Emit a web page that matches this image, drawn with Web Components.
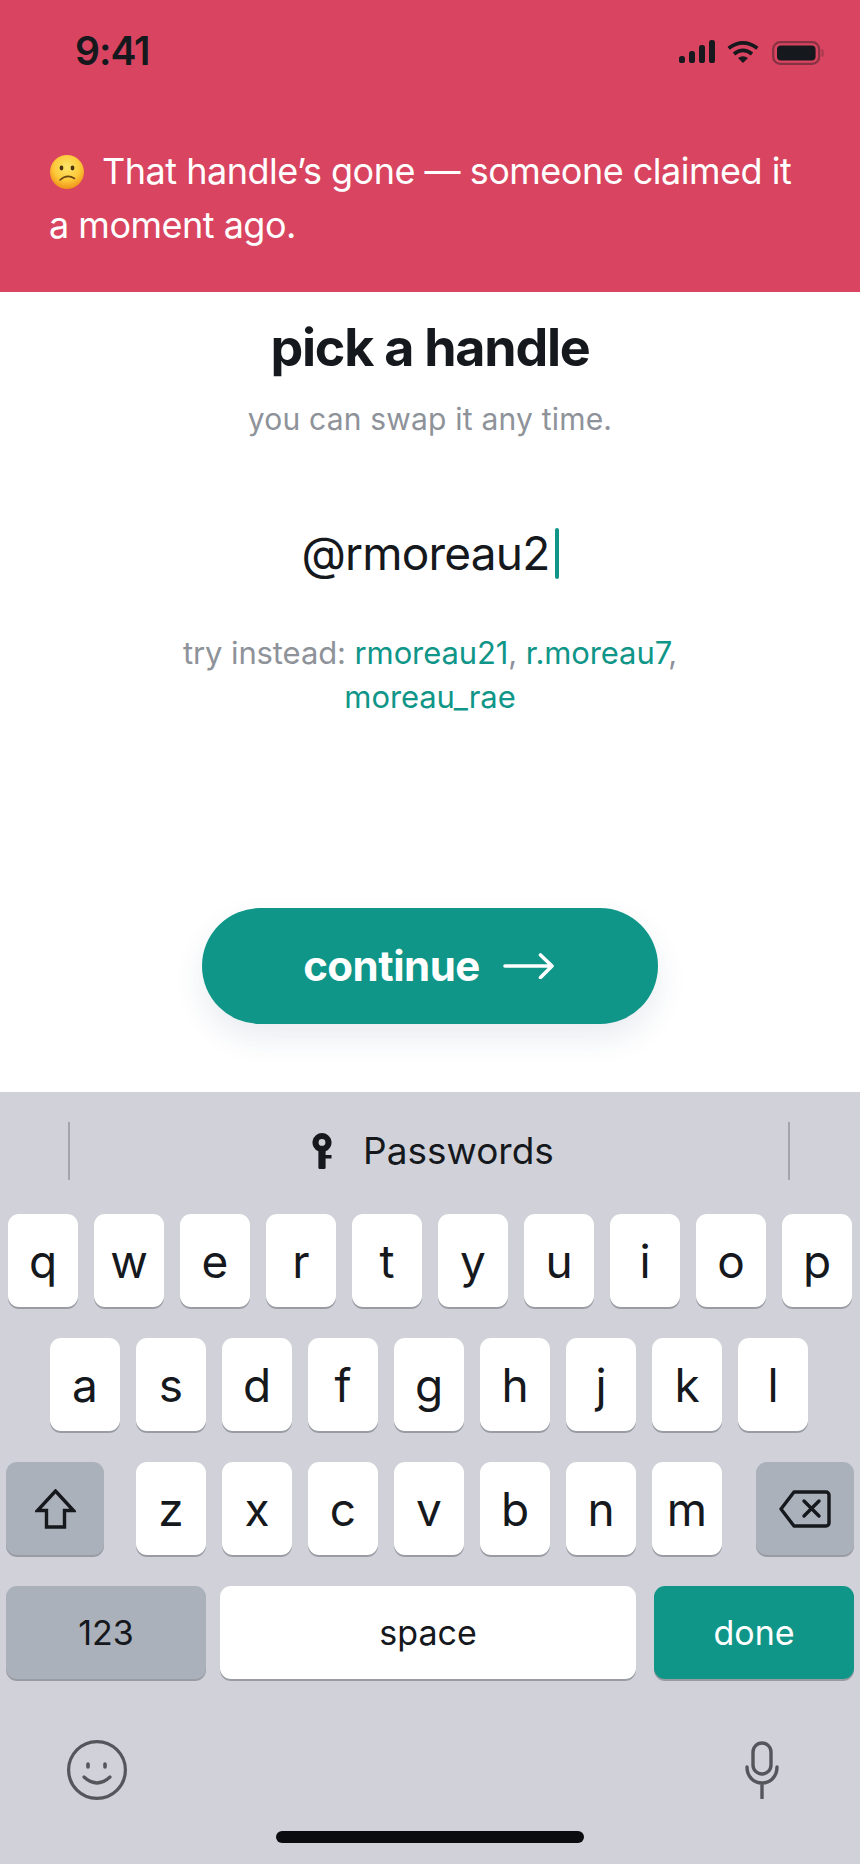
<!DOCTYPE html>
<html lang="en">
<head>
<meta charset="utf-8">
<title>pick a handle</title>
<style>
	html, body { margin: 0; padding: 0; }
	body { width: 860px; height: 1864px; background: #fff; font-family: Inter, "Liberation Sans", sans-serif; overflow: hidden; }
	handle-form em { font-style: normal; color: #0f9688; }
</style>
</head>
<body>
<handle-screen>
	<error-banner slot="banner">
		<sad-emoji></sad-emoji>That handle’s gone — someone claimed it a moment ago.
	</error-banner>
	<handle-form slot="form" value="@rmoreau2">
		<span slot="hint">try instead: <em>rmoreau21</em>, <em>r.moreau7</em>, <em>moreau_rae</em></span>
	</handle-form>
	<kb-keyboard slot="keyboard"></kb-keyboard>
</handle-screen>

<script>
const ICONS = {
	shift: `<svg width="41" height="40" viewBox="0 0 41 40" fill="none" stroke="#15181c" stroke-width="3.4" stroke-linejoin="miter"><path d="M20.5 2 L38.5 21.5 H29.5 V38 H11.5 V21.5 H2.5 Z"/></svg>`,
	del: `<svg width="52" height="38" viewBox="0 0 52 38" fill="none" stroke="#15181c" stroke-width="3.4" stroke-linejoin="round" stroke-linecap="round"><path d="M15 2 H47 a3 3 0 0 1 3 3 V33 a3 3 0 0 1 -3 3 H15 L2 19 Z"/><path d="M25 11 L40 26 M40 11 L25 26"/></svg>`
};

class StatusBar extends HTMLElement {
	constructor() {
		super();
		this.attachShadow({mode: 'open'}).innerHTML = `<style>
			:host { display: flex; align-items: flex-start; justify-content: space-between; height: 120px; padding: 30px 36px 0 75px; box-sizing: border-box; }
			.time { font: 600 39px/42px Inter, sans-serif; color: #15181c; letter-spacing: -1px; }
			.icons { display: flex; align-items: flex-start; margin-top: 10px; }
			svg { display: block; }
			.wifi { margin-left: 12px; }
			.bat { margin-left: 13px; margin-top: 1px; }
		</style>
		<div class="time">9:41</div>
		<div class="icons">
			<svg width="36" height="23" viewBox="0 0 36 23" fill="#15181c"><rect x="0" y="16" width="6" height="7" rx="2.6"/><rect x="10" y="11" width="6" height="12" rx="2.6"/><rect x="20" y="5" width="6" height="18" rx="2.6"/><rect x="30" y="0" width="6" height="23" rx="2.6"/></svg>
			<svg class="wifi" width="32" height="23" viewBox="0 0 32 23" fill="none" stroke="#15181c" stroke-width="3.6"><path d="M1.6 8.2 Q16 -2.6 30.4 8.2"/><path d="M7 14 Q16 6.6 25 14"/><path d="M11 18 Q16 14.6 21 18 L16 23 Z" fill="#15181c" stroke="none"/></svg>
			<svg class="bat" width="52" height="24" viewBox="0 0 52 24" fill="none"><rect x="1.2" y="1.2" width="46" height="21.6" rx="7" stroke="#15181c" stroke-opacity=".42" stroke-width="2.2"/><rect x="5" y="4.4" width="38.6" height="15.2" rx="4" fill="#15181c"/><path d="M50 8.5 Q51.5 12 50 15.5" stroke="#15181c" stroke-opacity=".25" stroke-width="2"/></svg>
		</div>`;
	}
}
customElements.define('status-bar', StatusBar);

class SadEmoji extends HTMLElement {
	constructor() {
		super();
		this.attachShadow({mode: 'open'}).innerHTML = `<style>
			:host { display: inline-block; width: 34px; height: 34px; margin: 0 18px 0 1px; vertical-align: -5px; }
			svg { display: block; }
		</style>
		<svg width="34" height="34" viewBox="0 0 34 34">
			<defs><radialGradient id="f" cx="50%" cy="36%" r="64%"><stop offset="0" stop-color="#ffe56b"/><stop offset=".6" stop-color="#fdc93a"/><stop offset="1" stop-color="#ee9218"/></radialGradient></defs>
			<circle cx="17" cy="17" r="17" fill="url(#f)"/>
			<ellipse cx="11.5" cy="13" rx="1.9" ry="2.4" fill="#4d3410"/>
			<ellipse cx="22.5" cy="13" rx="1.9" ry="2.4" fill="#4d3410"/>
			<path d="M10 25 Q17 18.5 24.5 23.5" fill="none" stroke="#6b4512" stroke-width="1.6" stroke-linecap="round"/>
		</svg>`;
	}
}
customElements.define('sad-emoji', SadEmoji);

class ErrorBanner extends HTMLElement {
	constructor() {
		super();
		this.attachShadow({mode: 'open'}).innerHTML = `<style>
			:host { display: block; height: 292px; background: #d94560; color: #fff; box-sizing: border-box; }
			.msg { padding: 24px 49px 0; font: 400 36px/54px Inter, sans-serif; letter-spacing: -.5px; }
		</style>
		<status-bar></status-bar>
		<div class="msg"><slot></slot></div>`;
	}
}
customElements.define('error-banner', ErrorBanner);

class HandleForm extends HTMLElement {
	constructor() {
		super();
		this.attachShadow({mode: 'open'}).innerHTML = `<style>
			:host { display: flex; flex-direction: column; align-items: center; height: 800px; padding-top: 25px; box-sizing: border-box; text-align: center; }
			h1 { margin: 0; font: 700 52px/62px Inter, sans-serif; letter-spacing: -1.25px; color: #15181c; }
			p { margin: 20px 0 0; font: 400 30px/40px Inter, sans-serif; letter-spacing: .2px; color: #8e9299; }
			.field { display: flex; align-items: center; height: 60px; margin-top: 84px; font: 400 46px/60px Inter, sans-serif; color: #15181c; letter-spacing: -.8px; }
			.caret { width: 4px; height: 51px; margin-left: 5px; border-radius: 2px; background: #0f9688; }
			.hint { width: 560px; margin-top: 48px; font: 400 31px/44px Inter, sans-serif; letter-spacing: -.1px; color: #8e9299; }
			::slotted(span) { display: block; }
			button { display: flex; align-items: center; justify-content: center; gap: 23px; width: 456px; height: 116px; margin-top: auto; margin-bottom: 68px; padding: 0 3px 0 0; border: 0; border-radius: 58px; background: #0f9688; color: #fff; font: 700 42px/48px Inter, sans-serif; letter-spacing: -.5px; box-shadow: 0 14px 30px rgba(40, 70, 110, .1); }
			svg { display: block; }
		</style>
		<h1>pick a handle</h1>
		<p>you can swap it any time.</p>
		<div class="field"><span id="value"></span><span class="caret"></span></div>
		<div class="hint"><slot name="hint"></slot></div>
		<button>continue
			<svg width="51" height="26" viewBox="0 0 51 26" fill="none" stroke="#fff" stroke-width="3.6" stroke-linecap="round" stroke-linejoin="round"><path d="M2 13 H49 M37.5 2 L49 13 L37.5 24.5"/></svg>
		</button>`;
		this.shadowRoot.getElementById('value').textContent = this.getAttribute('value');
	}
}
customElements.define('handle-form', HandleForm);

class KbKey extends HTMLElement {
	constructor() {
		super();
		this.attachShadow({mode: 'open'}).innerHTML = `<style>
			:host { display: flex; align-items: center; justify-content: center; width: 70px; height: 93px; border-radius: 11px; background: #fff; color: #15181c; font: 400 46px/1 Inter, sans-serif; box-shadow: 0 2px 0 #9a9ca3; flex: none; }
			:host([kind="mod"]) { background: #abb1ba; }
			:host([kind="go"]) { background: #0f9688; color: #fff; }
			:host([small]) { font-size: 34px; }
		</style>
		<slot></slot>`;
	}
}
customElements.define('kb-key', KbKey);

class KbKeyboard extends HTMLElement {
	constructor() {
		super();
		this.attachShadow({mode: 'open'}).innerHTML = `<style>
			:host { display: block; height: 772px; background: #d1d2d9; box-sizing: border-box; }
			svg { display: block; }
			.suggest { display: flex; align-items: center; justify-content: space-between; height: 118px; padding: 0 70px 0 68px; margin-bottom: 4px; color: #15181c; }
			.sep { width: 2px; height: 58px; background: #a3a5ac; }
			.pw { display: flex; align-items: center; gap: 31px; margin-left: 8px; font: 400 37px/44px Inter, sans-serif; }
			.rows { display: flex; flex-direction: column; gap: 31px; }
			.row { display: flex; gap: 16px; }
			.r1 { padding-left: 8px; }
			.r2 { padding-left: 50px; }
			.r3, .r4 { padding: 0 6px; }
			.letters { display: flex; gap: 16px; margin-left: 16px; }
			.r3 kb-key[kind="mod"] { width: 98px; }
			.r3 kb-key:last-child { margin-left: auto; }
			.r4 { gap: 0; }
			.n { width: 200px; }
			.sp { width: 416px; margin: 0 18px 0 14px; }
			.bottom { display: flex; justify-content: space-between; align-items: center; height: 60px; margin-top: 61px; padding: 0 81px 0 67px; }
			.home { width: 308px; height: 12px; margin: 31px auto 0; border-radius: 6px; background: #0b0c10; }
		</style>
		<div class="suggest">
			<div class="sep"></div>
			<div class="pw">
				<svg width="20" height="36" viewBox="0 0 20 36" fill="#15181c"><path fill-rule="evenodd" d="M10 0 a9.5 9.5 0 0 1 3.6 18.3 V22 H19.5 V25.5 H13.6 V34.5 a1.5 1.5 0 0 1 -1.5 1.5 H7.9 a1.5 1.5 0 0 1 -1.5 -1.5 V18.3 A9.5 9.5 0 0 1 10 0 Z M10 6 a3.4 3.4 0 1 0 0 6.8 a3.4 3.4 0 0 0 0 -6.8 Z"/></svg>
				<span>Passwords</span>
			</div>
			<div class="sep"></div>
		</div>
		<div class="rows">
			<div class="row r1" id="r1"></div>
			<div class="row r2" id="r2"></div>
			<div class="row r3">
				<kb-key kind="mod">${ICONS.shift}</kb-key>
				<div class="letters" id="r3"></div>
				<kb-key kind="mod">${ICONS.del}</kb-key>
			</div>
			<div class="row r4">
				<kb-key class="n" kind="mod" small>123</kb-key>
				<kb-key class="sp" small>space</kb-key>
				<kb-key class="n" kind="go" small>done</kb-key>
			</div>
		</div>
		<div class="bottom">
			<svg width="60" height="60" viewBox="0 0 60 60" fill="none" stroke="#54565c" stroke-width="3.2" stroke-linecap="round"><circle cx="30" cy="30" r="28.4"/><path d="M21 24 V27 M38 24 V27" stroke-width="3.6"/><path d="M17 37 Q30 49 43 37"/></svg>
			<svg width="34" height="58" viewBox="0 0 34 58" fill="none" stroke="#54565c" stroke-width="3.4" stroke-linecap="round"><rect x="8" y="2" width="18" height="31" rx="9"/><path d="M2 26 C2 36 9 42 17 42 C25 42 32 36 32 26 M17 42 V57"/></svg>
		</div>
		<div class="home"></div>`;
		this.fill('r1', 'qwertyuiop');
		this.fill('r2', 'asdfghjkl');
		this.fill('r3', 'zxcvbnm');
	}

	fill(id, letters) {
		var row = this.shadowRoot.getElementById(id);
		for(const ch of letters) {
			var key = document.createElement('kb-key');
			key.textContent = ch;
			row.appendChild(key);
		}
	}
}
customElements.define('kb-keyboard', KbKeyboard);

class HandleScreen extends HTMLElement {
	constructor() {
		super();
		this.attachShadow({mode: 'open'}).innerHTML = `<style>
			:host { display: flex; flex-direction: column; width: 860px; height: 1864px; }
		</style>
		<slot name="banner"></slot>
		<slot name="form"></slot>
		<slot name="keyboard"></slot>`;
	}
}
customElements.define('handle-screen', HandleScreen);
</script>
</body>
</html>
